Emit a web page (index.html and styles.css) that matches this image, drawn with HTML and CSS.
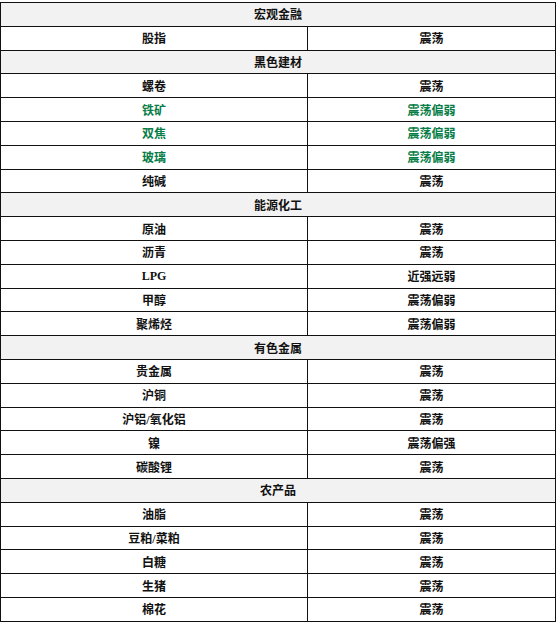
FILE: index.html
```html
<!DOCTYPE html>
<html lang="zh">
<head>
<meta charset="utf-8">
<title>品种观点</title>
<link rel="stylesheet" href="styles.css">
</head>
<body>
<div class="grid">
  <div class="cell head">宏观金融</div>
  <div class="cell">股指</div><div class="cell">震荡</div>
  <div class="cell head">黑色建材</div>
  <div class="cell">螺卷</div><div class="cell">震荡</div>
  <div class="cell green">铁矿</div><div class="cell green">震荡偏弱</div>
  <div class="cell green">双焦</div><div class="cell green">震荡偏弱</div>
  <div class="cell green">玻璃</div><div class="cell green">震荡偏弱</div>
  <div class="cell">纯碱</div><div class="cell">震荡</div>
  <div class="cell head">能源化工</div>
  <div class="cell">原油</div><div class="cell">震荡</div>
  <div class="cell">沥青</div><div class="cell">震荡</div>
  <div class="cell">LPG</div><div class="cell">近强远弱</div>
  <div class="cell">甲醇</div><div class="cell">震荡偏弱</div>
  <div class="cell">聚烯烃</div><div class="cell">震荡偏弱</div>
  <div class="cell head">有色金属</div>
  <div class="cell">贵金属</div><div class="cell">震荡</div>
  <div class="cell">沪铜</div><div class="cell">震荡</div>
  <div class="cell">沪铝/氧化铝</div><div class="cell">震荡</div>
  <div class="cell">镍</div><div class="cell">震荡偏强</div>
  <div class="cell">碳酸锂</div><div class="cell">震荡</div>
  <div class="cell head">农产品</div>
  <div class="cell">油脂</div><div class="cell">震荡</div>
  <div class="cell">豆粕/菜粕</div><div class="cell">震荡</div>
  <div class="cell">白糖</div><div class="cell">震荡</div>
  <div class="cell">生猪</div><div class="cell">震荡</div>
  <div class="cell">棉花</div><div class="cell">震荡</div>
</div>
</body>
</html>
```
FILE: styles.css
```css
html, body {
  margin: 0;
  padding: 0;
  background: #ffffff;
}
body {
  padding-top: 2px;
}
.grid {
  display: grid;
  grid-template-columns: 307px 248px;
  grid-auto-rows: 23.8px;
  width: 556px;
  box-sizing: border-box;
  border-top: 1px solid #111;
  border-left: 1px solid #111;
  font-family: "Liberation Serif", "Noto Sans CJK SC", serif;
  font-weight: bold;
  font-size: 12px;
  color: #111;
}
.cell {
  display: flex;
  align-items: center;
  justify-content: center;
  border-right: 1px solid #111;
  border-bottom: 1px solid #111;
  box-sizing: border-box;
  white-space: nowrap;
}
.head {
  grid-column: 1 / -1;
  background: #f2f2f2;
}
.green {
  color: #077d47;
}
```
